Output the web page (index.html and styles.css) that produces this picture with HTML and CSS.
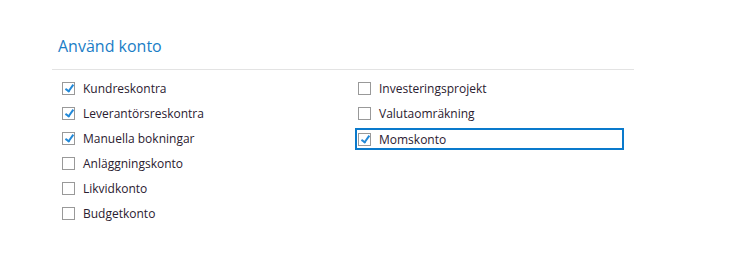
FILE: index.html
```html
<!DOCTYPE html>
<html lang="sv">
<head>
    <meta charset="UTF-8">
    <title>Använd konto</title>
    <link rel="stylesheet" href="styles.css">
</head>
<body>
    <div class="panel">
        <h2 class="panel-title">Använd konto</h2>
        <div class="options">
            <div class="column">
                <label class="option"><span class="box checked"></span><span>Kundreskontra</span></label>
                <label class="option"><span class="box checked"></span><span>Leverantörsreskontra</span></label>
                <label class="option"><span class="box checked"></span><span>Manuella bokningar</span></label>
                <label class="option"><span class="box"></span><span>Anläggningskonto</span></label>
                <label class="option"><span class="box"></span><span>Likvidkonto</span></label>
                <label class="option"><span class="box"></span><span>Budgetkonto</span></label>
            </div>
            <div class="column">
                <label class="option"><span class="box"></span><span>Investeringsprojekt</span></label>
                <label class="option"><span class="box"></span><span>Valutaomräkning</span></label>
                <label class="option focused"><span class="box checked"></span><span>Momskonto</span></label>
            </div>
        </div>
    </div>
</body>
</html>
```
FILE: styles.css
```css
body {
    margin: 0;
    background: #ffffff;
    font-family: "Open Sans", "Noto Sans", sans-serif;
    color: #222222;
}

.panel {
    width: 582px;
    margin-left: 52px;
    padding-top: 35px;
}

.panel-title {
    margin: 0;
    padding: 0 0 11px 6px;
    font-size: 16px;
    font-weight: normal;
    color: #1a7dc6;
    line-height: 23px;
    border-bottom: 1px solid #e3e3e3;
}

.options {
    display: flex;
    padding-top: 6px;
}

.column {
    width: 296px;
    padding-left: 10px;
    box-sizing: border-box;
}

.column + .column {
    width: 276px;
    padding-left: 10px;
}

/* one checkbox row */
.option {
    display: flex;
    align-items: center;
    height: 25px;
    font-size: 12px;
    color: #2a2030;
}

.box {
    width: 11px;
    height: 11px;
    border: 1px solid #999999;
    margin-right: 8px;
    position: relative;
    flex-shrink: 0;
}

.box.checked::after {
    content: "";
    position: absolute;
    left: 4px;
    top: 0px;
    width: 3px;
    height: 7px;
    border: solid #2289d8;
    border-width: 0 2px 2px 0;
    transform: rotate(35deg);
}

.option.focused {
    border: 2px solid #0a7acc;
    height: 18px;
    margin-left: -3px;
    padding-left: 1px;
    margin-top: 2px;
}
```
